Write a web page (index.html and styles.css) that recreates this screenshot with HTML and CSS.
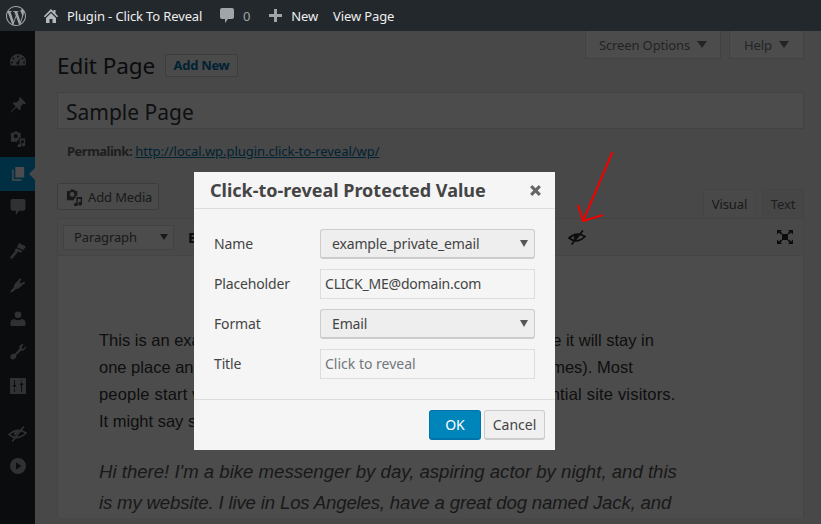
FILE: index.html
```html
<!DOCTYPE html>
<html lang="en">
<head>
<meta charset="UTF-8">
<title>Edit Page</title>
<link rel="stylesheet" href="styles.css">
</head>
<body>
<header class="adminbar">
  <svg class="wp-logo" viewBox="0 0 24 24"><path d="M21.469 6.825c.84 1.537 1.318 3.3 1.318 5.175 0 3.979-2.156 7.456-5.363 9.325l3.295-9.527c.615-1.54.82-2.771.82-3.864 0-.405-.026-.78-.07-1.11m-7.981.105c.647-.03 1.232-.105 1.232-.105.582-.075.514-.93-.067-.899 0 0-1.755.135-2.88.135-1.064 0-2.85-.15-2.85-.15-.585-.03-.661.855-.075.885 0 0 .54.061 1.125.09l1.68 4.605-2.37 7.08L5.354 6.9c.649-.03 1.234-.1 1.234-.1.585-.075.516-.93-.065-.896 0 0-1.746.138-2.874.138-.2 0-.438-.008-.69-.015C4.911 3.15 8.235 1.215 12 1.215c2.809 0 5.365 1.072 7.286 2.833-.046-.003-.091-.009-.141-.009-1.06 0-1.812.923-1.812 1.914 0 .89.513 1.643 1.06 2.531.411.72.89 1.643.89 2.977 0 .915-.354 1.994-.821 3.479l-1.075 3.585-3.9-11.61.001.014zM12 22.784c-1.059 0-2.081-.153-3.048-.437l3.237-9.406 3.315 9.087c.024.053.05.101.078.149-1.12.393-2.325.609-3.582.609M1.211 12c0-1.564.336-3.05.935-4.39L7.29 21.709C3.694 19.96 1.212 16.271 1.211 12M12 0C5.385 0 0 5.385 0 12s5.385 12 12 12 12-5.385 12-12S18.615 0 12 0"/></svg>
  <svg class="bar-home" viewBox="0 0 16 16"><path d="M8 1 0.8 8.2 2 9.3 8 3.4 14 9.3 15.200 8.200 12.500 5.500V2H10.500V3.500Z"/><path d="M3 10 8 5 13 10V15H9.500V11H6.500V15H3Z"/></svg>
  <span class="bar-site">Plugin - Click To Reveal</span>
  <svg class="bar-comment" viewBox="0 0 14 15"><path d="M2 0H12Q14 0 14 2V9Q14 11 12 11H8L5 15V11H2Q0 11 0 9V2Q0 0 2 0Z"/></svg>
  <span class="bar-count">0</span>
  <svg class="bar-plus" viewBox="0 0 13 13"><path d="M5 0H8V5H13V8H8V13H5V8H0V5H5Z"/></svg>
  <span class="bar-new">New</span>
  <span class="bar-view">View Page</span>
</header>

<div class="layout">
  <nav class="sidemenu">
    <svg class="side-icon gauge" viewBox="0 0 16 16"><path d="M8 2A8 8 0 0 0 0 10Q0 12 1 13.500H15Q16 12 16 10A8 8 0 0 0 8 2ZM8 3.500A1 1 0 1 1 8 5.500 1 1 0 0 1 8 3.500ZM3.500 5.500A1 1 0 1 1 3.500 7.500 1 1 0 0 1 3.500 5.500ZM12.500 5.500A1 1 0 1 1 12.500 7.500 1 1 0 0 1 12.500 5.500ZM2 9.500A1 1 0 1 1 2 11.500 1 1 0 0 1 2 9.500ZM14 9.500A1 1 0 1 1 14 11.500 1 1 0 0 1 14 9.500ZM10.500 6 9 10.300A1.500 1.500 0 1 1 7.500 9.800Z"/></svg>
    <svg class="side-icon pin" viewBox="0 0 16 16"><path d="M10 0 16 6 14.800 7.200 13.500 6.400 10.500 9.400 10.800 12 9.500 13.300 6.500 10.300 1 15.500 .5 15 5.700 9.500 2.700 6.500 4 5.200 6.600 5.500 9.600 2.500 8.800 1.200Z"/></svg>
    <svg class="side-icon media" viewBox="0 0 18 18"><path fill-rule="evenodd" d="M1 2H4L5 .5H8.500L9.500 2H12V7.500H10V10H8.500V12H1ZM6.500 3.300A2.400 2.400 0 1 0 6.500 8.100 2.400 2.400 0 0 0 6.500 3.300Z"/><path d="M11 8.500H17V15.500A2 2 0 1 1 15.500 13.600V10.500H12.500V16.500A2 2 0 1 1 11 14.600Z"/></svg>
    <div class="side-active">
      <svg class="side-icon pages" viewBox="0 0 16 18"><path d="M5 1H15V13H5ZM3 4V15H12V16.500H1.500V4Z"/></svg>
    </div>
    <svg class="side-icon comments" viewBox="0 0 14 15"><path d="M2 0H12Q14 0 14 2V9Q14 11 12 11H8L5 15V11H2Q0 11 0 9V2Q0 0 2 0Z"/></svg>
    <svg class="side-icon brush" viewBox="0 0 18 18"><path d="M10 0 18 4 15 8 8 5ZM7 6 14 9 12 11 9 9.500 3 17.500Q1 18 0 16L6 9 5 8Z"/></svg>
    <svg class="side-icon plug" viewBox="0 0 18 18"><path d="M9 4 14 9Q11 13 6 14L3 17 .5 17.500 1 15 4 12Q5 7 9 4ZM11 1.500 13 2.500 10.500 6 9 4.500ZM16 5 17 7 13.500 9 12 7.500Z"/></svg>
    <svg class="side-icon user" viewBox="0 0 16 17"><circle cx="8" cy="4" r="3.500"/><path d="M0 13Q0 9 4 8.500 8 11 12 8.500 16 9 16 13V15Q16 16 14 16H2Q0 16 0 15Z"/></svg>
    <svg class="side-icon wrench" viewBox="0 0 17 17"><path d="M12.500 0 10 2.500V5L5 10.500Q2 10 .5 12.500 0 15 1.500 16 4 17.500 6 15 7 13.500 6.500 12L12 7H14.500L17 4V2.500L14.500 5H12.500V3L14.500 .5Z"/></svg>
    <svg class="side-icon sliders" viewBox="0 0 16 16"><path fill-rule="evenodd" d="M0 0H16V16H0ZM4 2V7H2.500L4.500 10 6.500 7H5V2ZM4 11V14H5V11ZM11 2V3H12V2ZM11.500 4 9.500 7H11V14H12V7H13.500Z"/></svg>
    <svg class="side-icon eye" viewBox="0 0 18 15"><path fill="none" stroke="currentColor" stroke-width="1.500" d="M1 8Q9 1 17 6.500 9 14.500 1 8ZM4 14.500 15 .5"/><path d="M9 4.500A3 3 0 0 0 6.500 9.500L10.500 5Z"/></svg>
    <svg class="side-icon play" viewBox="0 0 16 16"><path fill-rule="evenodd" d="M8 0A8 8 0 1 1 8 16 8 8 0 0 1 8 0ZM6 4.500V11.500L11.500 8Z"/></svg>
  </nav>

  <main class="page">
    <div class="screen-tabs">
      <span class="screen-tab tab-options">Screen Options <i class="caret"></i></span>
      <span class="screen-tab tab-help">Help <i class="caret"></i></span>
    </div>
    <div class="heading">
      <h1>Edit Page</h1>
      <a class="add-new">Add New</a>
    </div>
    <div class="title-input">Sample Page</div>
    <p class="permalink"><b>Permalink:</b> <a>http://local.wp.plugin.click-to-reveal/wp/</a></p>
    <div class="media-row">
      <span class="add-media">
        <svg class="media-icon" viewBox="0 0 18 18"><path fill-rule="evenodd" d="M1 2H4L5 .5H8.500L9.500 2H12V7.500H10V10H8.500V12H1ZM6.500 3.300A2.400 2.400 0 1 0 6.500 8.100 2.400 2.400 0 0 0 6.500 3.300Z"/><path d="M11 8.500H17V15.500A2 2 0 1 1 15.500 13.600V10.500H12.500V16.500A2 2 0 1 1 11 14.600Z"/></svg>
        Add Media
      </span>
      <div class="editor-tabs">
        <span class="editor-tab tab-on">Visual</span>
        <span class="editor-tab tab-text">Text</span>
      </div>
    </div>
    <div class="editor">
      <div class="toolbar">
        <span class="format">Paragraph <i class="caret"></i></span>
        <b class="bold-btn">B</b>
        <svg class="tool-eye" viewBox="0 0 18 15"><path fill="none" stroke="currentColor" stroke-width="1.700" d="M1 8Q9 1 17 6.500 9 14.500 1 8ZM3.500 14.500 15 .5"/><path d="M9 4.500A3 3 0 0 0 6.500 9.500L10.500 5Z"/></svg>
        <svg class="tool-full" viewBox="0 0 16 14"><path d="M5 4H11V10H5ZM0 0H5L3.500 1.500 5.500 3.500 4 4.500 2 2.500 0 4.500ZM16 0H11L12.500 1.500 10.500 3.500 12 4.500 14 2.500 16 4.500ZM0 14H5L3.500 12.500 5.500 10.500 4 9.500 2 11.500 0 9.500ZM16 14H11L12.500 12.500 10.500 10.500 12 9.500 14 11.500 16 9.500Z"/></svg>
      </div>
      <div class="editor-body">
        <p class="lead">This is an example page. It's different from a blog post because it will stay in<br>one place and will show up in your site navigation (in most themes). Most<br><span class="wide-line">people start with an About page that introduces them to potential site visitors.</span><br>It might say something like this:</p>
        <p class="quote">Hi there! I'm a bike messenger by day, aspiring actor by night, and this<br><span class="tight-line">is my website. I live in Los Angeles, have a great dog named Jack, and</span></p>
      </div>
    </div>
  </main>
</div>

<div class="overlay"></div>

<svg class="arrow" viewBox="0 0 60 80"><path d="M35.500 1 6 70M1 54 6 70 26 64" fill="none" stroke="#f00000" stroke-width="2"/></svg>

<section class="modal">
  <div class="modal-head">
    <h2>Click-to-reveal Protected Value</h2>
    <svg class="modal-close" viewBox="0 0 12 12"><path d="M1 3 3 1 6 4 9 1 11 3 8 6 11 9 9 11 6 8 3 11 1 9 4 6Z"/></svg>
  </div>
  <div class="modal-body">
    <label>Name</label>
    <div class="select">example_private_email <i class="caret"></i></div>
    <label>Placeholder</label>
    <input class="field" type="text" value="CLICK_ME@domain.com">
    <label>Format</label>
    <div class="select">Email <i class="caret"></i></div>
    <label>Title</label>
    <input class="field" type="text" placeholder="Click to reveal">
  </div>
  <div class="modal-foot">
    <button class="btn btn-ok">OK</button>
    <button class="btn">Cancel</button>
  </div>
</section>
</body>
</html>
```

FILE: styles.css
```css
* {
  box-sizing: border-box;
}
html, body {
  height: 524px;
}
body {
  margin: 0;
  background: #f1f1f1;
  font-family: "Noto Sans", sans-serif;
  font-size: 13px;
  letter-spacing: -.13px;
  color: #444;
  overflow: hidden;
}
svg {
  display: block;
  fill: currentColor;
  flex: none;
}
.caret {
  display: inline-block;
  width: 0;
  height: 0;
  border-left: 5px solid transparent;
  border-right: 5px solid transparent;
  border-top: 7px solid currentColor;
}

/* admin bar */
.adminbar {
  position: relative;
  z-index: 3;
  display: flex;
  align-items: center;
  height: 31px;
  padding-left: 6px;
  background: #23282d;
  color: #eee;
  white-space: nowrap;
}
.wp-logo {
  width: 20px;
  height: 20px;
  color: #a0a5aa;
}
.bar-home {
  width: 16px;
  height: 16px;
  margin-left: 17px;
  color: #b4b9be;
}
.bar-site {
  margin-left: 8px;
  width: 135px;
}
.bar-comment {
  width: 14px;
  height: 15px;
  margin-left: 18px;
  color: #a0a5aa;
}
.bar-count {
  margin-left: 9px;
  color: #a0a5aa;
}
.bar-plus {
  width: 13px;
  height: 13px;
  margin-left: 19px;
  color: #a0a5aa;
}
.bar-new {
  margin-left: 9px;
}
.bar-view {
  margin-left: 15px;
}

.layout {
  display: flex;
  height: 493px;
}

/* left menu */
.sidemenu {
  width: 35px;
  flex: none;
  display: flex;
  flex-direction: column;
  align-items: center;
  background: #23282d;
  color: #a0a5aa;
}
.side-icon {
  width: 16px;
  height: 16px;
}
.gauge { margin-top: 21px; }
.pin { margin-top: 29px; }
.media { margin-top: 18px; }
.side-active {
  position: relative;
  width: 100%;
  height: 34px;
  margin-top: 10px;
  display: flex;
  align-items: center;
  justify-content: center;
  background: #0099dd;
  color: #fff;
}
.side-active::after {
  content: "";
  position: absolute;
  right: 0;
  top: 11px;
  border: 6px solid transparent;
  border-right-color: #f1f1f1;
}
.comments { margin-top: 8px; }
.brush { margin-top: 28px; }
.plug { margin-top: 18px; }
.user { margin-top: 18px; }
.wrench { margin-top: 17px; }
.sliders { margin-top: 18px; }
.eye {
  width: 19px;
  height: 16px;
  margin-top: 32px;
}
.play { margin-top: 16px; }

/* page */
.page {
  flex: 1;
  padding: 0 17px 0 22px;
  min-width: 0;
}
.screen-tabs {
  display: flex;
  justify-content: flex-end;
  gap: 8px;
}
.screen-tab {
  display: flex;
  align-items: center;
  justify-content: center;
  gap: 7px;
  height: 28px;
  background: #fff;
  border: 1px solid #ddd;
  border-top: 0;
  color: #72777c;
}
.tab-options { width: 136px; }
.tab-help { width: 75px; }
.heading {
  display: flex;
  align-items: center;
  margin-top: -8px;
  gap: 10px;
}
h1 {
  margin: 0;
  font-size: 22.5px;
  line-height: 29px;
  font-weight: 400;
  color: #23282d;
  letter-spacing: -.1px;
}
.add-new {
  height: 23px;
  width: 73px;
  line-height: 21px;
  text-align: center;
  font-weight: 700;
  color: #0073aa;
  background: #f7f7f7;
  border: 1px solid #ccc;
  border-radius: 2px;
  letter-spacing: -.3px;
}
.title-input {
  height: 37px;
  margin-top: 12px;
  padding: 1px 0 0 8px;
  line-height: 36px;
  font-size: 21px;
  letter-spacing: 0;
  color: #32373c;
  background: #fff;
  border: 1px solid #ddd;
}
.permalink {
  margin: 13px 0 0;
  padding-left: 10px;
  line-height: 19px;
  color: #666;
}
.permalink b {
  letter-spacing: -.5px;
}
.permalink a {
  color: #0073aa;
  letter-spacing: -.04px;
  text-decoration: underline;
}
.media-row {
  display: flex;
  align-items: flex-end;
  justify-content: space-between;
  height: 57px;
}
.add-media {
  display: flex;
  align-items: center;
  gap: 5px;
  width: 102px;
  height: 27px;
  margin-bottom: 8px;
  padding: 1px 0 0 8px;
  background: #f7f7f7;
  border: 1px solid #ccc;
  border-radius: 3px;
  color: #555;
}
.media-icon {
  width: 17px;
  height: 17px;
}
.editor-tabs {
  display: flex;
  gap: 6px;
}
.editor-tab {
  width: 42px;
  height: 29px;
  line-height: 28px;
  text-align: center;
  color: #666;
  background: #ebebeb;
  border: 1px solid #e5e5e5;
  border-bottom: 0;
}
.tab-on {
  width: 53px;
  background: #f5f5f5;
  color: #555;
}
.editor {
  border: 1px solid #e5e5e5;
  border-bottom: 0;
  background: #fff;
  height: 300px;
}
.toolbar {
  display: flex;
  align-items: center;
  height: 37px;
  padding-left: 5px;
  background: #f5f5f5;
  border-bottom: 1px solid #e5e5e5;
  color: #555;
}
.format {
  display: flex;
  align-items: center;
  justify-content: space-between;
  width: 111px;
  height: 25px;
  padding: 0 5px 0 10px;
  background: #fff;
  border: 1px solid #ddd;
  color: #555;
}
.format .caret {
  border-left-width: 4px;
  border-right-width: 4px;
  border-top-width: 6px;
}
.bold-btn {
  margin-left: 14px;
  font-size: 15px;
  color: #23282d;
}
.tool-eye {
  width: 18px;
  height: 15px;
  margin-left: 370px;
  color: #23282d;
}
.tool-full {
  width: 16px;
  height: 14px;
  margin-left: 191px;
  color: #23282d;
}
.editor-body {
  padding: 71px 0 0 41px;
  white-space: nowrap;
  color: #333;
  letter-spacing: 0;
}
.lead {
  margin: 0;
  font-family: "Liberation Sans", sans-serif;
  font-size: 16.5px;
  line-height: 27px;
}
.wide-line {
  letter-spacing: .19px;
}
.quote {
  margin: 21px 0 0;
  font-family: "Liberation Sans", sans-serif;
  font-style: italic;
  font-size: 18.6px;
  line-height: 31px;
  color: #555;
}
.tight-line {
  letter-spacing: -.16px;
}

/* dim layer, arrow and dialog sit over the page */
.overlay {
  position: fixed;
  inset: 0;
  z-index: 1;
  background: rgba(0, 0, 0, .7);
}
.arrow {
  position: absolute;
  left: 577px;
  top: 151px;
  width: 60px;
  height: 80px;
  z-index: 2;
}
.modal {
  position: absolute;
  left: 194px;
  top: 172px;
  width: 361px;
  height: 278px;
  z-index: 2;
  background: #f5f5f5;
  color: #444;
}
.modal-head {
  display: flex;
  align-items: center;
  justify-content: space-between;
  height: 37px;
  padding: 0 13px 0 16px;
  border-bottom: 1px solid #ddd;
}
h2 {
  margin: 0;
  font-size: 18px;
  font-weight: 700;
  letter-spacing: 0;
  color: #444;
}
.modal-close {
  width: 13px;
  height: 13px;
  color: #666;
}
.modal-body {
  display: grid;
  grid-template-columns: 106px 215px;
  grid-auto-rows: 30px;
  row-gap: 10px;
  align-items: center;
  height: 191px;
  padding: 20px 0 0 20px;
  border-bottom: 1px solid #ddd;
  font-size: 14px;
  letter-spacing: -.15px;
}
.modal-body label {
  padding-bottom: 2px;
  color: #444;
}
.select {
  display: flex;
  align-items: center;
  justify-content: space-between;
  height: 30px;
  padding: 0 6px 0 11px;
  background: #eee;
  border: 1px solid #ccc;
  border-bottom-width: 2px;
  border-radius: 3px;
  color: #444;
}
.select .caret {
  border-left-width: 4px;
  border-right-width: 4px;
  border-top-width: 7px;
  color: #555;
}
.field {
  width: 100%;
  height: 30px;
  padding: 0 4px 2px;
  background: #f5f5f5;
  border: 1px solid #ddd;
  font: inherit;
  letter-spacing: -.2px;
  color: #444;
}
.field::placeholder {
  letter-spacing: 0;
  color: #72777c;
  opacity: 1;
}
.modal-foot {
  display: flex;
  justify-content: flex-end;
  gap: 3px;
  padding: 10px 10px 0 0;
}
.btn {
  height: 30px;
  width: 61px;
  padding: 0;
  background: #f0f0f0;
  border: 1px solid #ccc;
  border-bottom-width: 2px;
  border-radius: 3px;
  font: inherit;
  font-size: 14px;
  color: #444;
}
.btn-ok {
  width: 52px;
  background: #0085ba;
  border-color: #0073aa;
  color: #fff;
}
```
